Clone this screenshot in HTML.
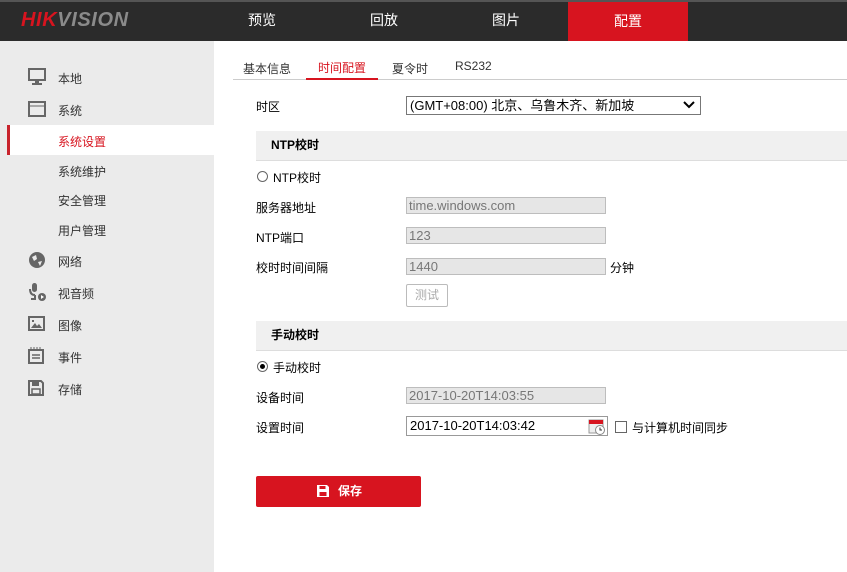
<!DOCTYPE html>
<html><head><meta charset="utf-8"><style>
*{margin:0;padding:0;box-sizing:border-box}
body{width:847px;height:572px;overflow:hidden;background:#fff;font-family:"Liberation Sans","Noto Sans CJK SC",sans-serif;font-size:12px;color:#000;position:relative}
.abs{position:absolute}
.top{left:0;top:0;width:847px;height:41px;background:#2b2b2b;border-top:2px solid #555}
.logo{left:21px;top:9px;font-size:20px;font-weight:bold;font-style:italic;letter-spacing:0.6px}
.nav{top:0;height:41px;width:120px;text-align:center;line-height:41px;color:#fff;font-size:14px}
.side{left:0;top:41px;width:214px;height:531px;background:#ebebeb}
.si{left:58px;font-size:12px;color:#333}
.lab{left:256px;color:#000}
.inp{left:406px;width:200px;height:17px;background:#e6e6e6;border:1px solid #bdbdbd;color:#777;font-size:13px;line-height:15px;padding-left:2px}
.band{left:256px;width:591px;height:30px;background:#f0f0f0;border-bottom:1px solid #ddd;font-weight:bold;padding-left:15px;line-height:29px}
</style></head><body>
<div class="abs top"></div>
<div class="abs logo"><span style="color:#d7141f">HIK</span><span style="color:#8a8a8a">VISION</span></div>
<div class="abs nav" style="left:202px">预览</div>
<div class="abs nav" style="left:324px">回放</div>
<div class="abs nav" style="left:446px">图片</div>
<div class="abs nav" style="left:568px;background:#d7141f;top:2px;height:39px;line-height:39px">配置</div>

<div class="abs side"></div>
<div class="abs" style="left:7px;top:125px;width:207px;height:30px;background:#fff;border-left:3px solid #c8232c"></div>
<svg class="abs" style="left:28px;top:68px" width="18" height="17"><rect x="1" y="1" width="16" height="11" fill="none" stroke="#666" stroke-width="2"/><rect x="7" y="12" width="4" height="3" fill="#666"/><rect x="4" y="15" width="10" height="2" fill="#666"/></svg>
<div class="abs si" style="top:70px">本地</div>
<svg class="abs" style="left:28px;top:101px" width="18" height="16"><rect x="1" y="1" width="16" height="14" fill="none" stroke="#666" stroke-width="2"/><line x1="2" y1="5" x2="16" y2="5" stroke="#666"/></svg>
<div class="abs si" style="top:102px">系统</div>
<div class="abs si" style="top:133px;color:#d7141f">系统设置</div>
<div class="abs si" style="top:163px">系统维护</div>
<div class="abs si" style="top:192px">安全管理</div>
<div class="abs si" style="top:222px">用户管理</div>
<svg class="abs" style="left:28px;top:251px" width="18" height="18"><circle cx="9" cy="9" r="8" fill="#666"/><path d="M4 6 L8 4 L9 8 L6 10 Z M10 11 L14 10 L12 15 Z" fill="#ebebeb"/></svg>
<div class="abs si" style="top:253px">网络</div>
<svg class="abs" style="left:28px;top:282px" width="19" height="20"><rect x="4" y="1" width="5" height="9" rx="2.5" fill="#666"/><path d="M2 7 Q2 13 7 13 M7 13 V17 H3" stroke="#666" stroke-width="2" fill="none"/><circle cx="14" cy="15" r="4" fill="#666"/><path d="M13 13 L16 15 L13 17Z" fill="#fff"/></svg>
<div class="abs si" style="top:285px">视音频</div>
<svg class="abs" style="left:28px;top:316px" width="17" height="15"><rect x="1" y="1" width="15" height="13" fill="none" stroke="#666" stroke-width="2"/><path d="M3 12 L7 7 L9 10 L11 8 L14 12Z" fill="#666"/><rect x="4" y="4" width="2" height="2" fill="#666"/></svg>
<div class="abs si" style="top:317px">图像</div>
<svg class="abs" style="left:28px;top:347px" width="16" height="17"><rect x="1" y="3" width="14" height="13" fill="none" stroke="#666" stroke-width="2"/><path d="M3 0V3M6 0V3M9 0V3M12 0V3" stroke="#666"/><path d="M4 8H12M4 11H12" stroke="#666" stroke-width="1.5"/></svg>
<div class="abs si" style="top:349px">事件</div>
<svg class="abs" style="left:28px;top:380px" width="16" height="16"><path d="M1 1H13L15 3V15H1Z" fill="none" stroke="#666" stroke-width="2"/><rect x="4" y="1" width="7" height="5" fill="#666"/><rect x="4" y="9" width="8" height="5" fill="none" stroke="#666" stroke-width="1.5"/></svg>
<div class="abs si" style="top:381px">存储</div>

<div class="abs" style="left:243px;top:60px;color:#333">基本信息</div>
<div class="abs" style="left:318px;top:59px;color:#d7141f">时间配置</div>
<div class="abs" style="left:392px;top:60px;color:#333">夏令时</div>
<div class="abs" style="left:455px;top:59px;color:#333">RS232</div>
<div class="abs" style="left:233px;top:79px;width:614px;height:1px;background:#ccc"></div>
<div class="abs" style="left:306px;top:78px;width:72px;height:2px;background:#d7141f"></div>

<div class="abs lab" style="top:98px">时区</div>
<div class="abs" style="left:406px;top:96px;width:295px;height:19px;border:1px solid #777;font-size:13px;line-height:17px;padding-left:3px">(GMT+08:00) 北京、乌鲁木齐、新加坡</div>
<svg class="abs" style="left:683px;top:101px" width="12" height="9"><path d="M1 1L6 6L11 1" stroke="#000" stroke-width="2" fill="none"/></svg>

<div class="abs band" style="top:131px">NTP校时</div>
<div class="abs" style="left:257px;top:171px;width:11px;height:11px;border:1px solid #666;border-radius:50%"></div>
<div class="abs" style="left:273px;top:169px">NTP校时</div>
<div class="abs lab" style="top:199px">服务器地址</div>
<div class="abs inp" style="top:197px">time.windows.com</div>
<div class="abs lab" style="top:229px">NTP端口</div>
<div class="abs inp" style="top:227px">123</div>
<div class="abs lab" style="top:259px">校时时间间隔</div>
<div class="abs inp" style="top:258px">1440</div>
<div class="abs" style="left:610px;top:259px">分钟</div>
<div class="abs" style="left:406px;top:284px;width:42px;height:23px;border:1px solid #bbb;border-radius:2px;color:#aaa;text-align:center;line-height:21px">测试</div>

<div class="abs band" style="top:321px">手动校时</div>
<div class="abs" style="left:257px;top:361px;width:11px;height:11px;border:1px solid #666;border-radius:50%"></div>
<div class="abs" style="left:260px;top:364px;width:5px;height:5px;background:#000;border-radius:50%"></div>
<div class="abs" style="left:273px;top:359px">手动校时</div>
<div class="abs lab" style="top:389px">设备时间</div>
<div class="abs inp" style="top:387px">2017-10-20T14:03:55</div>
<div class="abs lab" style="top:419px">设置时间</div>
<div class="abs" style="left:406px;top:416px;width:202px;height:20px;border:1px solid #999;font-size:13px;line-height:18px;padding-left:3px">2017-10-20T14:03:42</div>
<svg class="abs" style="left:588px;top:417px" width="18" height="18"><rect x="1" y="3" width="14" height="13" fill="#eee" stroke="#999"/><rect x="1" y="3" width="14" height="4" fill="#d7141f"/><circle cx="12" cy="13" r="4.5" fill="#fff" stroke="#888"/><path d="M12 10.5V13H14" stroke="#333" fill="none"/></svg>
<div class="abs" style="left:615px;top:421px;width:12px;height:12px;border:1px solid #666"></div>
<div class="abs" style="left:632px;top:419px">与计算机时间同步</div>

<div class="abs" style="left:256px;top:476px;width:165px;height:31px;background:#d7141f;border-radius:2px;color:#fff;font-weight:bold;line-height:31px;padding-left:82px">保存</div>
<svg class="abs" style="left:316px;top:484px" width="14" height="14"><path d="M1 1H11L13 3V13H1Z" fill="#fff"/><rect x="3.5" y="2" width="6" height="3" fill="#d7141f"/><rect x="3.5" y="8" width="7" height="4" fill="#d7141f"/></svg>
</body></html>
